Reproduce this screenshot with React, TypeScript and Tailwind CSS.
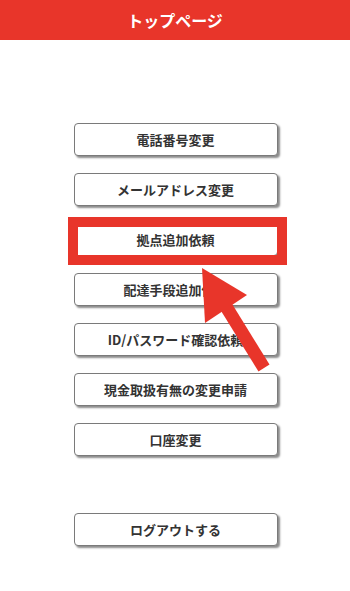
import React from "react";

const items = [
  "電話番号変更",
  "メールアドレス変更",
  "拠点追加依頼",
  "配達手段追加依頼",
  "ID/パスワード確認依頼",
  "現金取扱有無の変更申請",
  "口座変更",
];

function MenuButton({ label }: { label: string }) {
  return (
    <button className="w-[204px] h-[33px] rounded-[4px] border border-[#7a7a7a] bg-white shadow-[2px_2px_2px_rgba(0,0,0,0.45)] text-[13px] font-bold text-[#333] flex items-center justify-center">
      {label}
    </button>
  );
}

export default function App() {
  return (
    <div
      className="relative w-[350px] h-[591px] bg-white overflow-hidden"
      style={{ fontFamily: '"Noto Sans CJK JP", "Noto Sans", sans-serif' }}
    >
      <header className="h-[40px] bg-[#e8352a] flex items-center justify-center">
        <h1 className="text-white text-[16px] font-bold">トップページ</h1>
      </header>

      <div className="flex flex-col items-center pl-[1px] pt-[83px] gap-[17px]">
        {items.map((label) => (
          <MenuButton key={label} label={label} />
        ))}
        <div className="mt-[40px]">
          <MenuButton label="ログアウトする" />
        </div>
      </div>

      {/* 注釈: 赤枠 */}
      <div className="absolute left-[68px] top-[217px] w-[219px] h-[48px] border-[10px] border-[#e8352a]" />

      {/* 注釈: 矢印 */}
      <svg className="absolute left-0 top-0" width="350" height="591" viewBox="0 0 350 591">
        <line x1="264" y1="368" x2="222" y2="300" stroke="#e8352a" strokeWidth="13" />
        <polygon points="202,268 247,295 205,323" fill="#e8352a" />
      </svg>
    </div>
  );
}
